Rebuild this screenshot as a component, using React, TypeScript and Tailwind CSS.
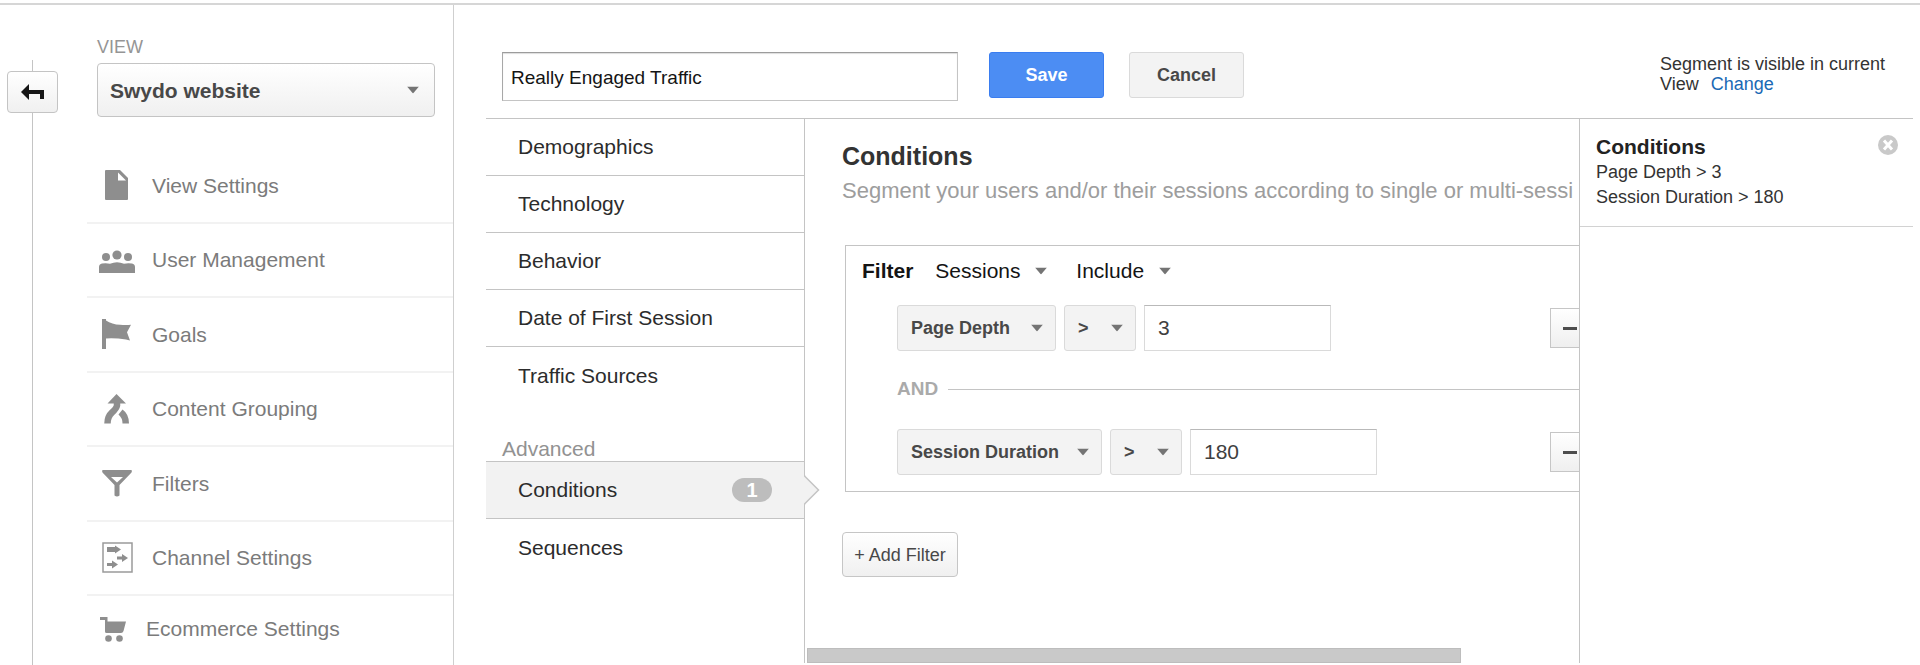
import { useState, type ReactNode } from 'react';

const settingsLinks = [
  { name: 'View Settings', icon: <PageIcon /> },
  { name: 'User Management', icon: <UsersIcon /> },
  { name: 'Goals', icon: <FlagIcon /> },
  { name: 'Content Grouping', icon: <MergeIcon /> },
  { name: 'Filters', icon: <FunnelIcon /> },
  { name: 'Channel Settings', icon: <ChannelIcon /> },
];

const segmentTabs = ['Demographics', 'Technology', 'Behavior', 'Date of First Session', 'Traffic Sources'];

const operators = ['>', '<', '='];

function PageIcon() {
  return (
    <svg width="24" height="30" viewBox="0 0 24 30" fill="#8e8e8e">
      <path d="M1 0h14l8 8v21a1 1 0 0 1-1 1H1a1 1 0 0 1-1-1V1a1 1 0 0 1 1-1z" />
      <path d="M13 2.500l8 8h-8z" fill="#fff" />
    </svg>
  );
}

function UsersIcon() {
  return (
    <svg width="36" height="24" viewBox="0 0 36 24" fill="#8e8e8e" className="mt-1">
      <circle cx="7" cy="7" r="4" />
      <circle cx="18" cy="5" r="4.600" />
      <circle cx="29" cy="7" r="4" />
      <path d="M0 23v-6q0-3 3-3.500 4-.8 8 .2 7-3 14 0 4-1 8-.2 3 .5 3 3.500v6z" />
    </svg>
  );
}

function FlagIcon() {
  return (
    <svg width="30" height="30" viewBox="0 0 30 30" fill="#8e8e8e">
      <path d="M0 0h4v1.500q6 4 14 4.300 6 .4 11 0l-4 7.500 3 8.200-4-.9q-11-1.800-20-1.100V30H0z" />
    </svg>
  );
}

function MergeIcon() {
  return (
    <svg width="26" height="30" viewBox="0 0 26 30">
      <path d="M12.500 0L22 9.500H3.500z" fill="#8e8e8e" />
      <path d="M13 8v3.500q-.5 3-5 7Q3.500 22.500 3.500 29.500" fill="none" stroke="#8e8e8e" strokeWidth="6.500" />
      <path d="M14.500 20.500l4-5q6.500 4.500 6.500 14h-6.500q0-5.500-4-9z" fill="#8e8e8e" />
    </svg>
  );
}

function FunnelIcon() {
  return (
    <svg width="30" height="27" viewBox="0 0 30 27" fill="#8e8e8e">
      <path
        fillRule="evenodd"
        d="M.5 0h29q.8 1.500-.2 2.800L17.500 15v10.500q-2.500 2-5 0V15L.7 2.800Q-.3 1.500.5 0zM9 7l6 5.500L21 7z"
      />
    </svg>
  );
}

function ChannelIcon() {
  return (
    <svg width="31" height="31" viewBox="0 0 31 31" fill="#8e8e8e">
      <rect x="1" y="1" width="29" height="29" fill="none" stroke="#9a9a9a" strokeWidth="1.500" />
      <path d="M5 5h8V3.500l6 4-6 4V10H5z" />
      <path d="M15 14.500h5v-2.500l6 4-6 4v-2.500h-5z" />
      <path d="M5 21h5v-2.500l6 4-6 4V24H5z" />
    </svg>
  );
}

function CartIcon() {
  return (
    <svg width="27" height="25" viewBox="0 0 27 25" fill="#8e8e8e" className="-ml-0.5">
      <path d="M0 0h7.500v4.500h18.500l-2.500 9.500q-.6 2-2.500 2H6.500q-1.500 0-1.500-1.500V3H0z" />
      <circle cx="8.500" cy="21.500" r="3.300" />
      <circle cx="19.500" cy="21.500" r="3.300" />
    </svg>
  );
}

function SettingsLink({ icon, label, iconClass }: { icon: ReactNode; label: string; iconClass: string }) {
  return (
    <a href="#" className="flex h-full items-center gap-[17px] pl-3 text-[21px] text-[#7b7b7b]">
      <span className={`flex justify-center ${iconClass}`}>{icon}</span>
      {label}
    </a>
  );
}

type DropdownProps = {
  id?: string;
  label?: string;
  options: string[];
  className: string;
  caretClass: string;
};

function Dropdown({ id, label, options, className, caretClass }: DropdownProps) {
  return (
    <div className="relative">
      <select id={id} aria-label={label} className={`block appearance-none outline-none ${className}`}>
        {options.map((option) => (
          <option key={option}>{option}</option>
        ))}
      </select>
      <svg
        width="12"
        height="7"
        viewBox="0 0 12 7"
        fill="#747474"
        className={`pointer-events-none absolute top-1/2 -translate-y-1/2 ${caretClass}`}
      >
        <path d="M0 0h12L6 7z" />
      </svg>
    </div>
  );
}

type ConditionProps = {
  metric: string[];
  metricClass: string;
  initial: string;
};

function Condition({ metric, metricClass, initial }: ConditionProps) {
  const [value, setValue] = useState(initial);
  const selectClass = 'h-[46px] rounded-[3px] border border-[#dadada] bg-[#f3f3f3] pl-[13px] text-lg font-bold text-[#484848]';

  return (
    <div className="flex items-center gap-2 pr-[45px]">
      <Dropdown label="Metric" options={metric} className={`${selectClass} ${metricClass}`} caretClass="right-[13px]" />
      <Dropdown label="Operator" options={operators} className={`${selectClass} w-[72px]`} caretClass="right-[13px]" />
      <input
        aria-label={`${metric[0]} value`}
        value={value}
        onChange={(e) => setValue(e.target.value)}
        className="h-[46px] w-[187px] border border-[#dadada] border-t-[#b9b9b9] px-[13px] text-[21px] text-[#3f3f3f] outline-none"
      />
      <button
        aria-label="Remove condition"
        className="ml-auto flex h-10 w-[39px] items-center justify-center border border-[#c6c6c6] bg-gradient-to-b from-white to-[#efefef]"
      >
        <span className="h-[3px] w-[14px] bg-[#4d4d4d]" />
      </button>
    </div>
  );
}

function Sidebar() {
  return (
    <aside className="flex w-[389px] shrink-0 flex-col border-r border-[#cfcfcf] pl-[22px]">
      <div className="pt-[30px] pr-[18px] pl-[10px]">
        <label htmlFor="view" className="block h-7 text-lg leading-6 text-[#959595]">
          VIEW
        </label>
        <Dropdown
          id="view"
          options={['Swydo website']}
          className="h-[54px] w-full rounded-[4px] border border-[#c4c4c4] bg-gradient-to-b from-white to-[#f0f0f0] pt-0.5 pl-3 text-[21px] font-bold text-[#484848]"
          caretClass="right-4"
        />
      </div>

      <ul className="mt-8 grid h-[447px] grid-rows-6">
        {settingsLinks.map((link) => (
          <li key={link.name} className="border-b-2 border-[#f2f2f2]">
            <SettingsLink icon={link.icon} label={link.name} iconClass="w-9" />
          </li>
        ))}
      </ul>
      <div className="h-[66px]">
        <SettingsLink icon={<CartIcon />} label="Ecommerce Settings" iconClass="w-[30px]" />
      </div>
    </aside>
  );
}

function SegmentNav() {
  const rowClass = 'flex h-[57px] items-center pl-8 text-[21px] text-[#2c2c2c]';

  return (
    <nav className="relative z-10 w-[319px] shrink-0 border-r border-[#c4c4c4]">
      {segmentTabs.map((tab) => (
        <a key={tab} href="#" className={`${rowClass} border-b border-[#c4c4c4] nth-[5]:border-b-0`}>
          {tab}
        </a>
      ))}

      <h3 className="flex h-[57px] items-end pl-4 text-[21px] leading-6 text-[#929292]">Advanced</h3>

      <a
        href="#"
        className="relative flex h-[58px] items-center justify-between border-y border-[#c4c4c4] bg-[#f2f2f2] pr-8 pl-8 text-[21px] text-[#2c2c2c]"
      >
        Conditions
        <span className="h-6 w-10 rounded-full bg-[#bdbdbd] text-center text-xl leading-6 font-bold text-white">1</span>
        {/* Pointer towards the open panel */}
        <svg width="16" height="30" viewBox="0 0 16 30" className="absolute top-1/2 left-full -translate-y-1/2">
          <path d="M0 .5L14.500 15 0 29.500z" fill="#f2f2f2" />
          <path d="M.5 0v1L14.500 15 .5 29v1" fill="none" stroke="#c4c4c4" strokeWidth="1.500" />
        </svg>
      </a>

      <a href="#" className={rowClass}>
        Sequences
      </a>
    </nav>
  );
}

function ConditionsPanel() {
  const plainSelect = 'h-[34px] bg-transparent text-[21px] text-[#141414]';

  return (
    <section className="flex min-w-0 flex-1 flex-col overflow-hidden">
      <div className="pt-[21px] pl-[37px]">
        <h2 className="text-[25px] leading-8 font-bold text-[#333]">Conditions</h2>
        <p className="mt-[5px] text-[22px] leading-7 whitespace-nowrap text-[#9d9d9d]">
          Segment your users and/or their sessions according to single or multi-sessi
        </p>

        <div className="mt-10 ml-[3px] w-[790px] border border-[#c4c4c4] pt-2 pb-4 pl-4">
          <div className="flex items-center">
            <span className="text-[21px] font-bold text-[#141414]">Filter</span>
            <div className="ml-[22px]">
              <Dropdown label="Scope" options={['Sessions', 'Users']} className={`${plainSelect} w-[112px]`} caretClass="right-0" />
            </div>
            <div className="ml-[29px]">
              <Dropdown label="Filter type" options={['Include', 'Exclude']} className={`${plainSelect} w-[95px]`} caretClass="right-0" />
            </div>
          </div>

          <div className="mt-[17px] pl-[35px]">
            <Condition metric={['Page Depth']} metricClass="w-[159px]" initial="3" />
            <div className="mt-[26px] mb-7 flex items-center gap-[10px]">
              <span className="text-[19px] leading-6 font-bold text-[#aaa]">AND</span>
              <span className="h-px flex-1 bg-[#c4c4c4]" />
            </div>
            <Condition metric={['Session Duration']} metricClass="w-[205px]" initial="180" />
          </div>
        </div>

        <button className="mt-10 h-[45px] w-[116px] rounded-[4px] border border-[#c6c6c6] bg-gradient-to-b from-white to-[#f0f0f0] text-lg whitespace-nowrap text-[#484848]">
          + Add Filter
        </button>
      </div>

      {/* Horizontal scroll thumb */}
      <div className="mt-auto ml-0.5 h-[15px] w-[84.5%] border border-[#bdbdbd] bg-[#c9c9c9]" />
    </section>
  );
}

function Summary() {
  return (
    <aside className="w-[334px] shrink-0 border-l border-[#c4c4c4]">
      <div className="flex items-start justify-between border-b border-[#d2d2d2] pt-4 pr-[15px] pb-4 pl-4 text-[#333]">
        <div>
          <h3 className="mb-px text-[21px] leading-6 font-bold text-[#222]">Conditions</h3>
          <p className="text-lg leading-[25px]">Page Depth &gt; 3</p>
          <p className="text-lg leading-[25px]">Session Duration &gt; 180</p>
        </div>
        <button aria-label="Remove segment conditions">
          <svg width="20" height="20" viewBox="0 0 20 20">
            <circle cx="10" cy="10" r="10" fill="#c9c9c9" />
            <path d="M6 5.500l8 9M14 5.500l-8 9" stroke="#fff" strokeWidth="3" />
          </svg>
        </button>
      </div>
    </aside>
  );
}

export default function App() {
  const [name, setName] = useState('Really Engaged Traffic');

  return (
    <div className="flex min-h-screen flex-col bg-white pt-[3px] font-['Liberation_Sans',Arial,sans-serif]">
      <div className="flex flex-1 border-t-2 border-[#d6d6d6]">
        {/* Back rail */}
        <div className="flex w-[65px] shrink-0 flex-col items-center pt-[55px]">
          <span className="h-[11px] w-px bg-[#c4c4c4]" />
          <button
            aria-label="Back"
            className="flex h-[42px] w-[51px] items-center justify-center rounded-[4px] border border-[#c4c4c4] bg-gradient-to-b from-white to-[#f0f0f0]"
          >
            <svg width="23" height="16" viewBox="0 0 23 16" fill="#161616">
              <path d="M0 8l8-8v6h15v9h-4v-5H8v6z" />
            </svg>
          </button>
          <span className="w-px flex-1 bg-[#c4c4c4]" />
        </div>

        <Sidebar />

        <main className="flex min-w-0 flex-1 flex-col pr-[7px] pb-0.5 pl-8">
          <header className="flex items-start border-b border-[#c4c4c4] pt-[47px] pb-[17px] pl-4">
            <input
              aria-label="Segment name"
              value={name}
              onChange={(e) => setName(e.target.value)}
              className="h-[49px] w-[456px] border border-[#c4c4c4] border-t-[#9c9c9c] border-l-[#a8a8a8] px-2 pt-0.5 text-[19px] text-[#141414] shadow-[inset_0_1px_1px_#ddd] outline-none"
            />
            <button className="ml-[31px] h-[46px] w-[115px] rounded-[3px] border border-[#3a7df0] bg-[#4c8df3] text-lg font-bold text-white">
              Save
            </button>
            <button className="ml-[25px] h-[46px] w-[115px] rounded-[3px] border border-[#dadada] bg-[#f3f3f3] text-lg font-bold text-[#484848]">
              Cancel
            </button>
            <p className="ml-auto w-[253px] pt-0.5 text-lg leading-5 text-[#333]">
              Segment is visible in current View
              <a href="#" className="ml-3 inline-block text-[#1a69b5]">
                Change
              </a>
            </p>
          </header>

          <div className="flex flex-1">
            <SegmentNav />
            <ConditionsPanel />
            <Summary />
          </div>
        </main>
      </div>
    </div>
  );
}
